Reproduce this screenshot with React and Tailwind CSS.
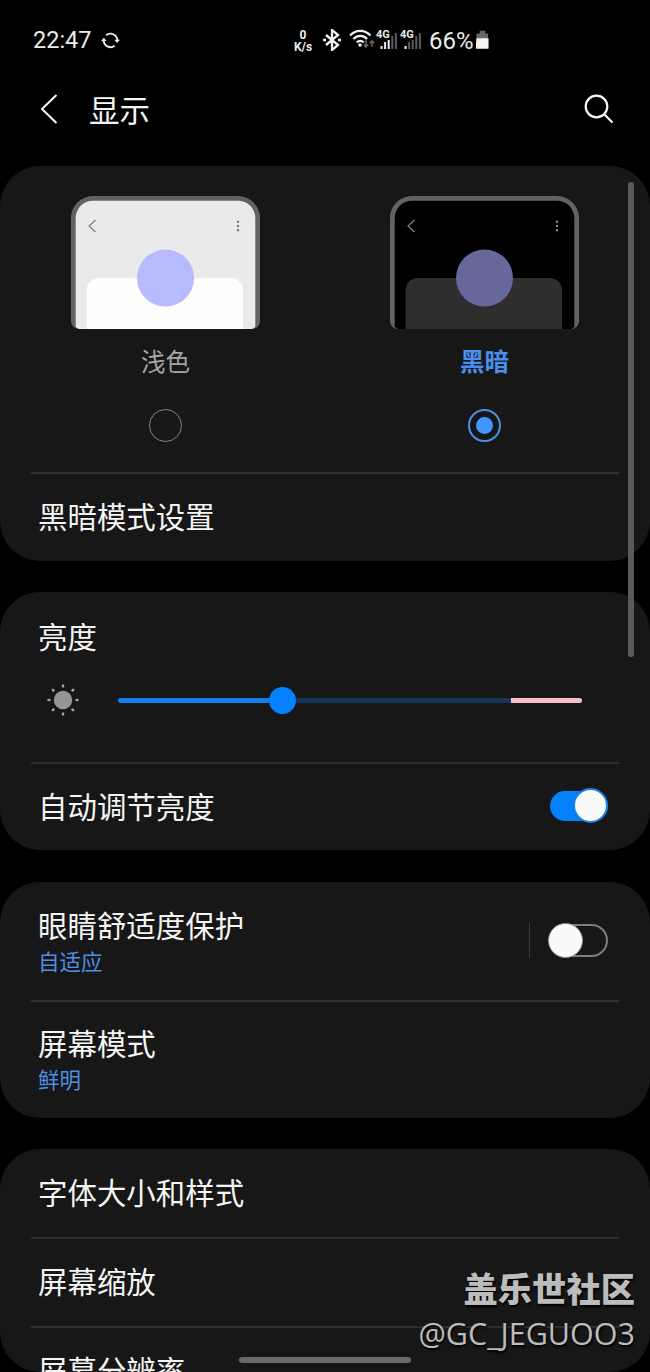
function StatusBar() {
  return (
    <header className="flex h-[80px] shrink-0 items-center pl-[33px] font-['Roboto','Noto_Sans_CJK_SC',sans-serif] text-[#ececec]">
      <span className="w-[68px] pt-[2px] text-[23.500px] leading-none">22:47</span>
      <svg className="mr-px h-[19px] w-[19px]" viewBox="0 0 20 20" fill="none" stroke="#ececec" strokeWidth="2">
        <path d="M5.4 4.4A7.3 7.3 0 0 1 17.2 10.5M14.4 15.6A7.3 7.3 0 0 1 2.8 9.5" />
        <path d="M14 9.2h6l-3 3.4zM0 10.6h6l-3-3.6z" fill="#ececec" stroke="none" />
      </svg>
      <div className="ml-[171px] flex w-[22px] flex-col items-center pt-[2px] text-[12px] font-bold leading-[12px]">
        <span>0</span>
        <span>K/s</span>
      </div>
      <svg className="ml-[8px] h-[22px] w-[20px]" viewBox="0 0 20 22" fill="none" stroke="#f2f2f2" strokeWidth="2.3">
        <path d="M4 6l12 10-6 5V1l6 5L4 16" />
        <path d="M1 11h3M16 11h3" strokeWidth="2.6" />
      </svg>
      <svg className="ml-[7px] h-[22px] w-[26px]" viewBox="0 0 26 22" fill="none" stroke="#f2f2f2" strokeWidth="2.2">
        <path d="M1 6.500c6-6.2 14.500-6.200 20.500 0M4.400 10c4-4.200 9.700-4.200 13.700 0M7.700 13.500c2.200-2.200 4.900-2.200 7.100 0" />
        <circle cx="11" cy="16" r="1.7" fill="#f2f2f2" stroke="none" />
        <path d="M17 11v7m-2.200-2.500l2.200 2.500 2.200-2.500M23 18v-6m-2.200 2.300l2.200-2.500 2.200 2.500" stroke="#666" strokeWidth="1.500" />
      </svg>
      <Signal strong={3} />
      <Signal strong={1} />
      <span className="ml-[6px] w-[47px] pt-[2px] text-[24px] leading-none">66%</span>
      <svg className="h-[20px] w-[13px]" viewBox="0 0 14 20">
        <path d="M4 0h6v3h3v6H0.500V3H4z" fill="#666" />
        <path d="M0.500 8h13v10.500q0 1-1 1h-12q-1 0-1-1z" fill="#f2f2f2" />
      </svg>
    </header>
  )
}

function Signal({ strong }) {
  const bars = [3, 7, 10, 13, 16]

  return (
    <div className="relative h-[20px] w-[24px]">
      <svg className="h-[20px] w-[24px]" viewBox="0 0 24 20">
        {bars.map((height, i) => (
          <rect
            key={height}
            x={5.500 + i * 3.600}
            y={19 - height}
            width="2"
            height={height}
            fill={i < strong ? '#f2f2f2' : '#5c5c5c'}
          />
        ))}
      </svg>
      <span className="absolute left-px top-0 bg-black text-[11px] font-bold leading-[10px]">4G</span>
    </div>
  )
}

function TitleBar() {
  return (
    <div className="flex h-[86px] shrink-0 items-start pl-[40px] pr-[36px] pt-[14px]">
      <svg className="h-[30px] w-[18px]" viewBox="0 0 18 30" fill="none" stroke="#f5f5f5" strokeWidth="2">
        <path d="M16.500 1L2 15l14.500 14" />
      </svg>
      <h1 className="-mt-[2px] ml-[31px] flex-1 text-[30.500px] leading-[34px]">显示</h1>
      <svg className="h-[30px] w-[30px]" viewBox="0 0 30 30" fill="none" stroke="#f5f5f5" strokeWidth="2.200">
        <circle cx="12.500" cy="12.500" r="10.800" />
        <path d="M20 20l8.500 8.500" />
      </svg>
    </div>
  )
}

function ThemePreview({ background, panel, circle, icon }) {
  return (
    <svg className="h-[133px] w-[189px]" viewBox="0 0 189 133">
      <path d="M0 22A22 22 0 0 1 22 0H167A22 22 0 0 1 189 22V125a8 8 0 0 1-8 8H8a8 8 0 0 1-8-8z" fill="#636363" />
      <path d="M4.700 22A17.300 17.300 0 0 1 22 4.700H167A17.300 17.300 0 0 1 184.300 22V131L181 133H8L4.700 131z" fill={background} />
      <path d="M15.700 133V94a12 12 0 0 1 12-12H160a12 12 0 0 1 12 12v39z" fill={panel} />
      <circle cx="94.500" cy="82" r="28.500" fill={circle} />
      <path d="M24.500 24L18 30l6.500 6" fill="none" stroke={icon} strokeWidth="1.100" />
      <circle cx="167" cy="25.700" r="1.200" fill={icon} />
      <circle cx="167" cy="30" r="1.200" fill={icon} />
      <circle cx="167" cy="34.300" r="1.200" fill={icon} />
    </svg>
  )
}

function Radio({ checked }) {
  return (
    <div
      className={
        checked
          ? 'flex size-[33px] items-center justify-center rounded-full border-2 border-[#4d8fe6]'
          : 'size-[33px] rounded-full border border-[#858585]'
      }
    >
      {checked && <div className="size-[17px] rounded-full bg-[#4495ff]" />}
    </div>
  )
}

function Card({ className, children }) {
  return <section className={`shrink-0 rounded-[40px] bg-[#171717] ${className}`}>{children}</section>
}

function Divider() {
  return <div className="mx-[31px] h-[2px] bg-[#2e2e2e]" />
}

function Row({ label, sub, className, children }) {
  return (
    <div className={`flex items-center justify-between pl-[38px] pr-[42px] ${className}`}>
      <div className={sub ? 'pt-[2px]' : 'pb-[5px]'}>
        <p className="text-[29.450px] leading-[36px]">{label}</p>
        {sub && <p className="text-[21.500px] leading-[37px] text-[#4f8ee6]">{sub}</p>}
      </div>
      {children}
    </div>
  )
}

function Brightness() {
  return (
    <div className="flex h-[36px] items-center pl-[46px] pr-[68px]">
      <svg className="h-[34px] w-[34px]" viewBox="0 0 34 34" stroke="#a0a0a0" strokeWidth="2.500" strokeLinecap="round">
        <circle cx="17" cy="17" r="9.200" fill="#969696" stroke="none" />
        <path d="M17 2.500v1M17 30.500v1M2.500 17h1M30.500 17h1M6.800 6.800l.700.700M26.500 26.500l.7.700M6.800 27.200l.7-.7M26.500 7.500l.7-.7" />
      </svg>
      <div className="ml-[38px] flex flex-1 items-center">
        <div className="h-[5px] w-[151px] rounded-l-full bg-[#127ef0]" />
        <div className="size-[27px] rounded-full bg-[#0381fe]" />
        <div className="h-[5px] w-[215px] bg-[#17365b]" />
        <div className="h-[5px] flex-1 rounded-r-full bg-[#f5c1c1]" />
      </div>
    </div>
  )
}

export default function App() {
  return (
    <div className="relative flex h-[1372px] w-[650px] flex-col overflow-hidden bg-black font-['Noto_Sans_CJK_SC',sans-serif] text-[#f5f5f5]">
      <StatusBar />
      <TitleBar />

      <main className="flex flex-col">
        <Card className="h-[395px] pt-[30px]">
          <div className="flex justify-between px-[71px]">
            <div className="flex flex-col items-center">
              <ThemePreview background="#eaeaea" panel="#fdfdfd" circle="#b7bafc" icon="#777777" />
              <p className="mt-[14px] text-[24.500px] leading-[36px] text-[#a5a5a5]">浅色</p>
              <div className="mt-[30px]">
                <Radio />
              </div>
            </div>
            <div className="flex flex-col items-center">
              <ThemePreview background="#000000" panel="#2e2e2e" circle="#66689c" icon="#8a8a8a" />
              <p className="mt-[14px] text-[24.500px] font-bold leading-[36px] text-[#4a8fee]">黑暗</p>
              <div className="mt-[30px]">
                <Radio checked />
              </div>
            </div>
          </div>
          <div className="mt-[30px]">
            <Divider />
          </div>
          <Row label="黑暗模式设置" className="h-[87px]" />
        </Card>

        <Card className="mt-[31px] h-[258px] pt-[24px]">
          <Row label="亮度" className="h-[42px]" />
          <div className="mb-[44px] mt-[24px]">
            <Brightness />
          </div>
          <Divider />
          <Row label="自动调节亮度" className="h-[86px]">
            <div className="mb-[3px] flex h-[30px] w-[58px] items-center justify-end rounded-full bg-[#0381fe]">
              <div className="size-[35px] shrink-0 rounded-full border-2 border-[#1a7fe6] bg-[#fafafa]" />
            </div>
          </Row>
        </Card>

        <Card className="mt-[32px] h-[236px]">
          <Row label="眼睛舒适度保护" sub="自适应" className="h-[118px]">
            <div className="mb-px flex items-center">
              <div className="mr-[19px] h-[35px] w-px bg-[#3c3c3c]" />
              <div className="flex h-[33px] w-[59px] items-center rounded-full border-2 border-[#7d7d7d]">
                <div className="-ml-[3px] size-[35px] shrink-0 rounded-full border border-[#8d8d8d] bg-[#fafafa]" />
              </div>
            </div>
          </Row>
          <Divider />
          <Row label="屏幕模式" sub="鲜明" className="h-[115px]" />
        </Card>

        <Card className="mt-[31px] h-[223px]">
          <Row label="字体大小和样式" className="h-[88px]" />
          <Divider />
          <Row label="屏幕缩放" className="h-[87px]" />
          <Divider />
          <div className="h-[44px] overflow-hidden">
            <Row label="屏幕分辨率" className="h-[87px]" />
          </div>
        </Card>
      </main>

      <div className="absolute left-[628px] top-[182px] h-[475px] w-[6px] rounded-full bg-[#5a5a5a]" />
      <div className="absolute left-[239px] top-[1357px] h-[6px] w-[172px] rounded-full bg-[#6b6b6b]" />
      <div className="absolute bottom-[19px] right-[15px] flex flex-col items-end whitespace-nowrap text-[#bcbcbc] [text-shadow:1px_2px_2px_#000]">
        <span className="mb-[4px] text-[34.300px] font-black leading-[44px]">盖乐世社区</span>
        <span className="font-['Open_Sans',sans-serif] text-[30.500px] leading-[40px]">@GC_JEGUOO3</span>
      </div>
    </div>
  )
}
